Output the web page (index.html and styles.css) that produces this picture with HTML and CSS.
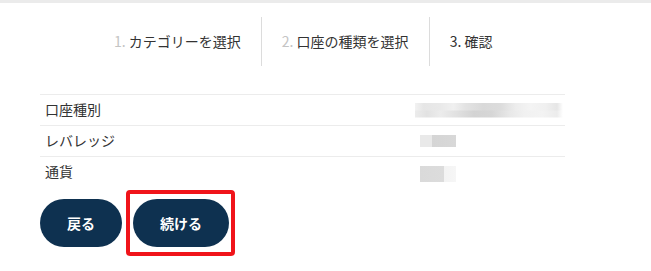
FILE: index.html
```html
<!DOCTYPE html>
<html lang="ja">
<head>
    <meta charset="UTF-8">
    <meta name="viewport" content="width=device-width, initial-scale=1.0">
    <title>口座の確認</title>
    <link rel="stylesheet" href="styles.css">
</head>
<body>
    <div class="topbar"></div>
    <div class="steps">
        <div class="step"><span class="num">1.</span> カテゴリーを選択</div>
        <div class="step"><span class="num">2.</span> 口座の種類を選択</div>
        <div class="step active"><span class="num">3.</span> 確認</div>
    </div>

    <div class="summary">
        <div class="row">
            <div class="label">口座種別</div>
            <div class="value"><span class="blur blur-long"></span></div>
        </div>
        <div class="row">
            <div class="label">レバレッジ</div>
            <div class="value"><span class="blur blur-short"></span></div>
        </div>
        <div class="row">
            <div class="label">通貨</div>
            <div class="value"><span class="blur blur-cur"></span></div>
        </div>
    </div>

    <div class="actions">
        <button class="btn">戻る</button>
        <span class="highlight">
            <button class="btn">続ける</button>
        </span>
    </div>
</body>
</html>
```

FILE: styles.css
```css
html, body {
    min-height: 100%;
}
body {
    margin: 0;
    padding: 0 0 24px;
    min-height: 271px;
    box-sizing: border-box;
    background-color: #fff;
    color: #333;
    font-family: "Noto Sans CJK JP", "Noto Sans", sans-serif;
    font-size: 14px;
}
.topbar {
    height: 3px;
    background-color: #ebebeb;
}
.steps {
    display: flex;
    margin-top: 14px;
    padding-left: 94px;
}
.step {
    padding: 0 20px;
    height: 49px;
    line-height: 49px;
    color: #333;
    white-space: nowrap;
}
.step + .step {
    border-left: 1px solid #dcdcdc;
}
.step .num {
    color: #c4c4c4;
}
.step.active .num {
    color: #333;
}
.summary {
    margin: 28px 0 0 40px;
    width: 525px;
    border-top: 1px solid #ececec;
}
.row {
    display: grid;
    grid-template-columns: 380px 1fr;
    align-items: center;
    height: 30px;
    border-bottom: 1px solid #ececec;
}
.row:last-child {
    border-bottom: none;
}
.label {
    padding: 0 0 3px 5px;
}
.value {
    display: flex;
    align-items: center;
}
.blur {
    display: inline-block;
}
.blur-long {
    width: 148px;
    height: 15px;
    margin-left: -5px;
    background:
        linear-gradient(90deg, #f2f2f2 0, #e6e6e6 6%, #e9e9e9 17%, #f0f0f0 26%, #e3e3e3 34%, #d9d9d9 46%, #dcdcdc 58%, #ededed 68%, #f4f4f4 78%, #f0f0f0 88%, #e6e6e6 96%, #fff 100%) top / 100% 50% no-repeat,
        linear-gradient(90deg, #ececec 0, #e2e2e2 8%, #ececec 17%, #e1e1e1 28%, #d3d3d3 40%, #d6d6d6 52%, #e8e8e8 64%, #f1f1f1 74%, #f3f3f3 86%, #ececec 96%, #fff 100%) bottom / 100% 50% no-repeat;
}
.blur-short {
    width: 36px;
    height: 12px;
    background: linear-gradient(90deg, #e9e9e9 0, #e9e9e9 33%, #d5d5d5 34%, #d8d8d8 100%);
}
.blur-cur {
    width: 36px;
    height: 16px;
    margin-top: 4px;
    background: linear-gradient(90deg, #dadada 0, #dcdcdc 66%, #f3f3f3 67%, #f6f6f6 100%);
}
.actions {
    display: flex;
    align-items: center;
    gap: 11px;
    margin: 12px 0 0 40px;
}
.btn {
    height: 48px;
    padding: 0 27px;
    border: none;
    border-radius: 24px;
    background-color: #0e3150;
    color: #fff;
    font-family: inherit;
    font-size: 14px;
    font-weight: bold;
    cursor: pointer;
}
.highlight {
    position: relative;
    display: inline-flex;
}
.highlight::after {
    content: "";
    position: absolute;
    top: -9px;
    bottom: -9px;
    left: -7px;
    right: -6px;
    border: 4px solid #f0141a;
    border-radius: 4px;
    pointer-events: none;
}
```
